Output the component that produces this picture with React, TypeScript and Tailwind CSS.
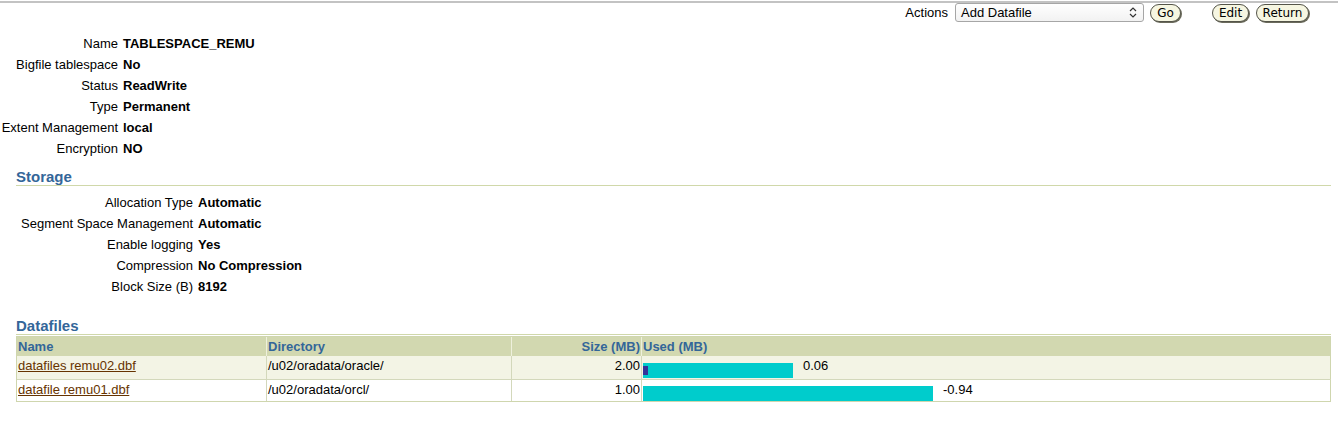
import React from "react";

const Btn = ({ label, w }: { label: string; w: string }) => (
  <div
    className={`${w} h-[18px] flex items-center justify-center rounded-[9px] border border-[#55554a] bg-[#f6f6e1] shadow-[1px_1px_0_#6b6b5c] text-[12px] leading-none text-black font-['DejaVu_Sans',sans-serif]`}
  >
    {label}
  </div>
);

const Row = ({ label, value, lw }: { label: string; value: string; lw: string }) => (
  <div className="flex h-[21px] leading-[21px]">
    <div className={`${lw} text-right shrink-0`}>{label}</div>
    <div className="pl-[5px] font-bold">{value}</div>
  </div>
);

const SectionHeader = ({ title }: { title: string }) => (
  <div className="h-[18px] leading-[17px] border-b border-[#d0d8aa] text-[15px] font-bold text-[#336699]">
    {title}
  </div>
);

export default function App() {
  return (
    <div className="w-[1338px] h-[422px] overflow-hidden bg-white text-black text-[13px] font-['Liberation_Sans',Arial,sans-serif]">
      <div className="mt-[1px] h-[2px] bg-[#c3c3c3]" />
      <div className="flex justify-end items-center h-[19px] pr-[29px]">
        <span className="leading-[19px]">Actions</span>
        <div className="ml-[7px] w-[189px] h-[19px] flex items-center justify-between rounded-[3px] border border-[#a6a6a6] bg-gradient-to-b from-white to-[#f2f2f2] pl-[5px] pr-[6px]">
          <span className="leading-none">Add Datafile</span>
          <svg width="8" height="11" viewBox="0 0 8 11" fill="none" stroke="#333" strokeWidth="1.2">
            <path d="M1 4 L4 1 L7 4" />
            <path d="M1 7 L4 10 L7 7" />
          </svg>
        </div>
        <div className="ml-[6px]">
          <Btn label="Go" w="w-[31px]" />
        </div>
        <div className="ml-[31px]">
          <Btn label="Edit" w="w-[37px]" />
        </div>
        <div className="ml-[7px]">
          <Btn label="Return" w="w-[53px]" />
        </div>
      </div>

      <div className="mt-[11px]">
        <Row lw="w-[118px]" label="Name" value="TABLESPACE_REMU" />
        <Row lw="w-[118px]" label="Bigfile tablespace" value="No" />
        <Row lw="w-[118px]" label="Status" value="ReadWrite" />
        <Row lw="w-[118px]" label="Type" value="Permanent" />
        <Row lw="w-[118px]" label="Extent Management" value="local" />
        <Row lw="w-[118px]" label="Encryption" value="NO" />
      </div>

      <div className="ml-[16px] mr-[7px] mt-[9px]">
        <SectionHeader title="Storage" />
        <div className="mt-[6px]">
          <Row lw="w-[177px]" label="Allocation Type" value="Automatic" />
          <Row lw="w-[177px]" label="Segment Space Management" value="Automatic" />
          <Row lw="w-[177px]" label="Enable logging" value="Yes" />
          <Row lw="w-[177px]" label="Compression" value="No Compression" />
          <Row lw="w-[177px]" label="Block Size (B)" value="8192" />
        </div>

        <div className="mt-[20px]">
          <SectionHeader title="Datafiles" />
        </div>

        <div className="mt-[1px] w-[1315px] border-l border-t border-[#cfd6ae]">
          <div className="flex h-[19px] bg-[#d2d8b0] text-[#336699] font-bold leading-[15px]">
            <div className="w-[250px] border-r border-[#eef0dc] pt-[2px] pl-[1px]">Name</div>
            <div className="w-[245px] border-r border-[#eef0dc] pt-[2px] pl-[1px]">Directory</div>
            <div className="w-[130px] border-r border-[#eef0dc] pt-[2px] pr-[1px] text-right">Size (MB)</div>
            <div className="w-[689px] border-r border-[#cfd6ae] pt-[2px] pl-[1px]">Used (MB)</div>
          </div>
          <div className="flex h-[24px] bg-[#f3f4e5] leading-[15px] border-b border-[#d3d8bb]">
            <div className="w-[250px] border-r border-[#d3d8bb] pt-[2px] pl-[1px]">
              <span className="text-[#663300] underline">datafiles remu02.dbf</span>
            </div>
            <div className="w-[245px] border-r border-[#d3d8bb] pt-[2px] pl-[1px]">/u02/oradata/oracle/</div>
            <div className="w-[130px] border-r border-[#d3d8bb] pt-[2px] pr-[1px] text-right">2.00</div>
            <div className="w-[689px] border-r border-[#cfd6ae] flex items-start pl-[1px]">
              <div className="mt-[7px] w-[150px] h-[15px] bg-[#00cccc] flex items-center">
                <div className="w-[5px] h-[9px] bg-[#333399]" />
              </div>
              <span className="ml-[10px] pt-[2px]">0.06</span>
            </div>
          </div>
          <div className="flex h-[22px] bg-white leading-[15px] border-b border-[#cfd6ae]">
            <div className="w-[250px] border-r border-[#d3d8bb] pt-[2px] pl-[1px]">
              <span className="text-[#663300] underline">datafile remu01.dbf</span>
            </div>
            <div className="w-[245px] border-r border-[#d3d8bb] pt-[2px] pl-[1px]">/u02/oradata/orcl/</div>
            <div className="w-[130px] border-r border-[#d3d8bb] pt-[2px] pr-[1px] text-right">1.00</div>
            <div className="w-[689px] border-r border-[#cfd6ae] flex items-start pl-[1px]">
              <div className="mt-[6px] w-[290px] h-[15px] bg-[#00cccc]" />
              <span className="ml-[10px] pt-[2px]">-0.94</span>
            </div>
          </div>
        </div>
      </div>
    </div>
  );
}
